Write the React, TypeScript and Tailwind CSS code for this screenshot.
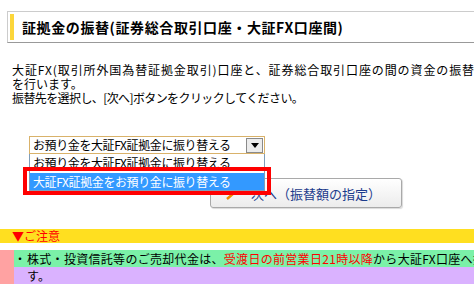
const font = { fontFamily: '"Noto Sans CJK JP", "Noto Sans", sans-serif' };

function SelectBox() {
  return (
    <div className="relative ml-[29px] mt-[31px] h-[18px] w-[236px]">
      <div className="flex h-full w-full items-center border border-[#d9b26a] bg-white pl-[3px] pr-[1px]">
        <span className="flex-1 whitespace-nowrap text-[12px] leading-none tracking-[-0.4px]">お預り金を大証FX証拠金に振り替える</span>
        <span className="flex h-[15px] w-[17px] items-center justify-center border border-[#8a8a8a] bg-[#ececec]">
          <svg width="8" height="5" viewBox="0 0 8 5">
            <path d="M0 0h8L4 5z" fill="#000" />
          </svg>
        </span>
      </div>

      {/* open option list */}
      <div className="absolute left-0 top-[18px] z-10 w-[236px] border border-t-0 border-[#7f9db9] bg-white">
        <div className="h-[19px] whitespace-nowrap pl-[3px] pt-[1px] text-[12px] leading-[15px] tracking-[-0.4px]">
          お預り金を大証FX証拠金に振り替える
        </div>
        <div className="h-[17px] whitespace-nowrap bg-[#3399ff] pl-[3px] text-[12px] leading-[17px] tracking-[-0.4px] text-white">
          大証FX証拠金をお預り金に振り替える
        </div>
      </div>

      {/* callout frame */}
      <div className="absolute left-[-6px] top-[31px] z-20 h-[28px] w-[248px] border-4 border-[#ff0000]" />
    </div>
  );
}

export default function App() {
  return (
    <div className="relative h-[289px] w-[474px] overflow-hidden bg-white text-black" style={font}>
      <div className="ml-[7px] mt-[11px] flex h-[32px] w-[467px] items-center overflow-hidden border border-r-0 border-[#cccccc] border-b-[#999999]">
        <div className="ml-[2px] h-[26px] w-[4px] shrink-0 bg-[#fcd63a]" />
        <h1 className="ml-[8px] whitespace-nowrap text-[14px] font-bold leading-none tracking-[0.6px]">
          証拠金の振替(証券総合取引口座・大証FX口座間)
        </h1>
      </div>

      <div className="mt-[20px] overflow-hidden whitespace-nowrap pl-[12px] text-[12px] leading-[14px]">
        <div className="tracking-[0.9px]">大証FX(取引所外国為替証拠金取引)口座と、証券総合取引口座の間の資金の振替</div>
        <div>を行います。</div>
        <div className="tracking-[-0.6px]">振替先を選択し、[次へ]ボタンをクリックしてください。</div>
      </div>

      <SelectBox />

      <button className="ml-[210px] mt-[24px] flex h-[30px] w-[192px] items-center rounded-[3px] border border-[#a9a9a9] bg-gradient-to-b from-white to-[#ececec] pl-[14px] shadow-[1px_1px_1px_rgba(0,0,0,0.15)]">
        <svg width="12" height="14" viewBox="0 0 12 14" className="mr-[14px]">
          <path d="M2 1l7 6-7 6" fill="none" stroke="#f08a00" strokeWidth="2.5" />
        </svg>
        <span className="whitespace-nowrap text-[13px] leading-none text-[#1c3b8c]">次へ（振替額の指定）</span>
      </button>

      <div className="mt-[21px] bg-yellow-300 pl-[12px] text-[12px] leading-[14px] text-[#ff0000]">▼ご注意</div>

      <div className="mt-[7px] overflow-hidden bg-red-300 pl-[14px] text-[12px] leading-[17px] tracking-[0.3px]">
        <div className="flex whitespace-nowrap bg-green-300">
          <span className="w-[13px] shrink-0">・</span>
          <span>
            株式・投資信託等のご売却代金は、
            <span className="text-[#ff0000]">受渡日の前営業日21時以降</span>
            から大証FX口座へ振替可能となりま
          </span>
        </div>
        <div className="bg-purple-300 pl-[13px]">す。</div>
      </div>
    </div>
  );
}
